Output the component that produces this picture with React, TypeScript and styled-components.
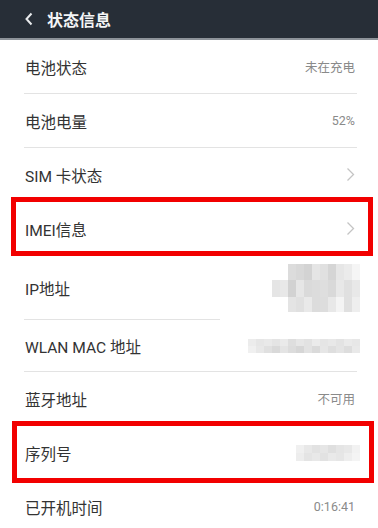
import React from "react";
import styled, { createGlobalStyle } from "styled-components";

const GlobalStyle = createGlobalStyle`
  html, body { margin: 0; padding: 0; background: #ffffff; }
  body { font-family: Roboto, "Noto Sans CJK SC", sans-serif; }
`;

const Page = styled.div`
  width: 378px;
  height: 528px;
  overflow: hidden;
  background: #ffffff;
`;

const Header = styled.header`
  height: 38px;
  background: #272e37;
  border-bottom: 2px solid #8d9399;
  display: flex;
  align-items: center;
  gap: 14px;
  padding-left: 25px;
`;

const HeaderTitle = styled.h1`
  margin: 0;
  font-size: 16px;
  font-weight: 700;
  color: #f4f5f6;
  letter-spacing: 0px;
`;

const List = styled.div`
  display: flex;
  flex-direction: column;
`;

const Row = styled.div<{ $h: number; $divider?: string }>`
  position: relative;
  height: ${(p) => p.$h}px;
  box-sizing: border-box;
  margin: 0 21px 0 24px;
  padding: 0 0 1px 1px;
  display: flex;
  align-items: center;
  justify-content: space-between;
  background: linear-gradient(#e3e3e3, #e3e3e3) left bottom /
    ${(p) => p.$divider ?? "100%"} 1px no-repeat;
`;

const Label = styled.span`
  font-size: 15.5px;
  color: #333333;
`;

const Value = styled.span`
  font-size: 12.5px;
  color: #8a8a8a;
  margin-right: 2px;
`;

const Highlight = styled.div<{ $t: number; $b: number; $l: number; $r: number }>`
  position: absolute;
  top: ${(p) => p.$t}px;
  bottom: ${(p) => p.$b}px;
  left: ${(p) => p.$l}px;
  right: ${(p) => p.$r}px;
  border: 5px solid #f20000;
  pointer-events: none;
`;

const MosaicWrap = styled.div<{ $shift: number }>`
  display: flex;
  margin-right: ${(p) => p.$shift}px;
`;

const Chevron = () => (
  <svg width="9" height="15" viewBox="0 0 9 15" style={{ marginRight: 2 }}>
    <polyline points="1.5,1.5 7.5,7.5 1.5,13.5" fill="none" stroke="#c4c4c4" strokeWidth="1.3" />
  </svg>
);

const BackIcon = () => (
  <svg width="8" height="14" viewBox="0 0 8 14">
    <polyline points="6.5,1.5 1.5,7 6.5,12.5" fill="none" stroke="#e8eaec" strokeWidth="2" />
  </svg>
);

type Cell = [number, number, number, number, string];

const Mosaic = ({ w, h, cells }: { w: number; h: number; cells: Cell[] }) => (
  <svg width={w} height={h} viewBox={`0 0 ${w} ${h}`}>
    {cells.map(([x, y, cw, ch, c], i) => (
      <rect key={i} x={x} y={y} width={cw} height={ch} fill={c} />
    ))}
  </svg>
);

const rowCells = (y: number, h: number, x0: number, colors: string[], cw = 8): Cell[] =>
  colors.map((c, i) => [x0 + i * cw, y, cw, h, c] as Cell);

const ipCells: Cell[] = [
  ...rowCells(0, 16, 16, ["#dcdcdc", "#d8d8d8", "#d3d3d3", "#e5e5e5", "#e0e0e0", "#d5d5d5", "#e6e6e6", "#ebebeb", "#f5f5f5"]),
  ...rowCells(16, 17, 0, ["#e5e5e5", "#e8e8e8", "#d2d2d2", "#e6e6e6", "#dadada", "#dcdcdc", "#dedede", "#d9d9d9", "#e8e8e8", "#e0e0e0", "#e8e8e8"]),
  ...rowCells(33, 15, 16, ["#e4e4e4", "#e0e0e0", "#e9e9e9", "#dcdcdc", "#dddddd", "#e8e8e8", "#f4f4f4", "#e0e0e0", "#eeeeee"]),
];

const wlanCells: Cell[] = [
  ...rowCells(0, 7, 0, ["#ececec", "#e6e6e6", "#e9e9e9", "#e4e4e4", "#eaeaea", "#dedede", "#e6e6e6", "#e2e2e2", "#ebebeb", "#e5e5e5", "#e8e8e8", "#e3e3e3", "#eaeaea", "#e7e7e7"]),
  ...rowCells(7, 7, 0, ["#f0f0f0", "#e8e8e8", "#e0e0e0", "#d9d9d9", "#e4e4e4", "#dcdcdc", "#d6d6d6", "#e2e2e2", "#dadada", "#e6e6e6", "#dedede", "#e4e4e4", "#dddddd", "#e9e9e9"]),
];

const serialCells: Cell[] = [
  ...rowCells(0, 8, 0, ["#f0f0f0", "#e8e8e8", "#e2e2e2", "#e6e6e6", "#dfdfdf", "#e5e5e5", "#e8e8e8", "#f2f2f2"]),
  ...rowCells(8, 8, 0, ["#ededed", "#e4e4e4", "#e8e8e8", "#e2e2e2", "#e9e9e9", "#e6e6e6", "#eeeeee", "#f4f4f4"]),
];

export default function App() {
  return (
    <Page>
      <GlobalStyle />
      <Header>
        <BackIcon />
        <HeaderTitle>状态信息</HeaderTitle>
      </Header>
      <List>
        <Row $h={54}>
          <Label>电池状态</Label>
          <Value>未在充电</Value>
        </Row>
        <Row $h={54}>
          <Label>电池电量</Label>
          <Value>52%</Value>
        </Row>
        <Row $h={54}>
          <Label>SIM 卡状态</Label>
          <Chevron />
        </Row>
        <Row $h={54}>
          <Label>IMEI信息</Label>
          <Chevron />
          <Highlight $t={-5} $b={0} $l={-13} $r={-16} />
        </Row>
        <Row $h={64} $divider="196px">
          <Label>IP地址</Label>
          <MosaicWrap $shift={-3}>
            <Mosaic w={88} h={48} cells={ipCells} />
          </MosaicWrap>
        </Row>
        <Row $h={52}>
          <Label>WLAN MAC 地址</Label>
          <MosaicWrap $shift={-3}>
            <Mosaic w={112} h={14} cells={wlanCells} />
          </MosaicWrap>
        </Row>
        <Row $h={54}>
          <Label>蓝牙地址</Label>
          <Value>不可用</Value>
        </Row>
        <Row $h={54}>
          <Label>序列号</Label>
          <MosaicWrap $shift={-3}>
            <Mosaic w={64} h={16} cells={serialCells} />
          </MosaicWrap>
          <Highlight $t={-5} $b={-3} $l={-12} $r={-17} />
        </Row>
        <Row $h={54}>
          <Label>已开机时间</Label>
          <Value>0:16:41</Value>
        </Row>
      </List>
    </Page>
  );
}
